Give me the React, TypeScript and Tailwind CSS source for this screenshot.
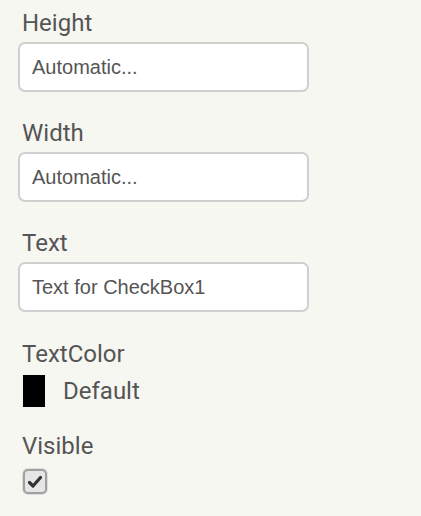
const Label = ({ children }: { children: string }) => (
  <div className="h-[29px] pl-[4px] text-[24px] leading-[29px] text-[#555]">{children}</div>
);

const Field = ({ label, value }: { label: string; value: string }) => (
  <div className="flex flex-col">
    <Label>{label}</Label>
    <div className="mt-[4px] flex h-[50px] w-[291px] items-center rounded-[7px] border-2 border-[#cfcfcf] bg-white pl-[12px] text-[20px] text-[#555] font-['Liberation_Sans',Arial,sans-serif]">
      {value}
    </div>
  </div>
);

export default function App() {
  return (
    <div className="h-[516px] w-[421px] bg-[#f7f7f2] pl-[18px] pt-[9px] font-['Roboto',sans-serif]">
      <div className="flex flex-col gap-[27px]">
        <Field label="Height" value="Automatic..." />
        <Field label="Width" value="Automatic..." />
        <Field label="Text" value="Text for CheckBox1" />
      </div>
      <div className="mt-[28px] flex flex-col">
        <Label>TextColor</Label>
        <div className="mt-[6px] flex items-center pl-[5px]">
          <div className="h-[32px] w-[22px] bg-black" />
          <span className="ml-[18px] text-[24px] leading-[32px] text-[#555]">Default</span>
        </div>
      </div>
      <div className="mt-[25px] flex flex-col">
        <Label>Visible</Label>
        <div className="mt-[8px] pl-[5px]">
          <div className="flex h-[25px] w-[24px] items-center justify-center rounded-[5px] border-2 border-[#a0a0a0] bg-[#e6e6e6] shadow-[0_0_0_1px_#dcdcdc]">
            <svg viewBox="0 0 16 16" className="h-[16px] w-[16px]">
              <path d="M2.5 8.5 L6 12 L13.5 3.5" fill="none" stroke="#333" strokeWidth="3.2" strokeLinecap="round" strokeLinejoin="round" />
            </svg>
          </div>
        </div>
      </div>
    </div>
  );
}
